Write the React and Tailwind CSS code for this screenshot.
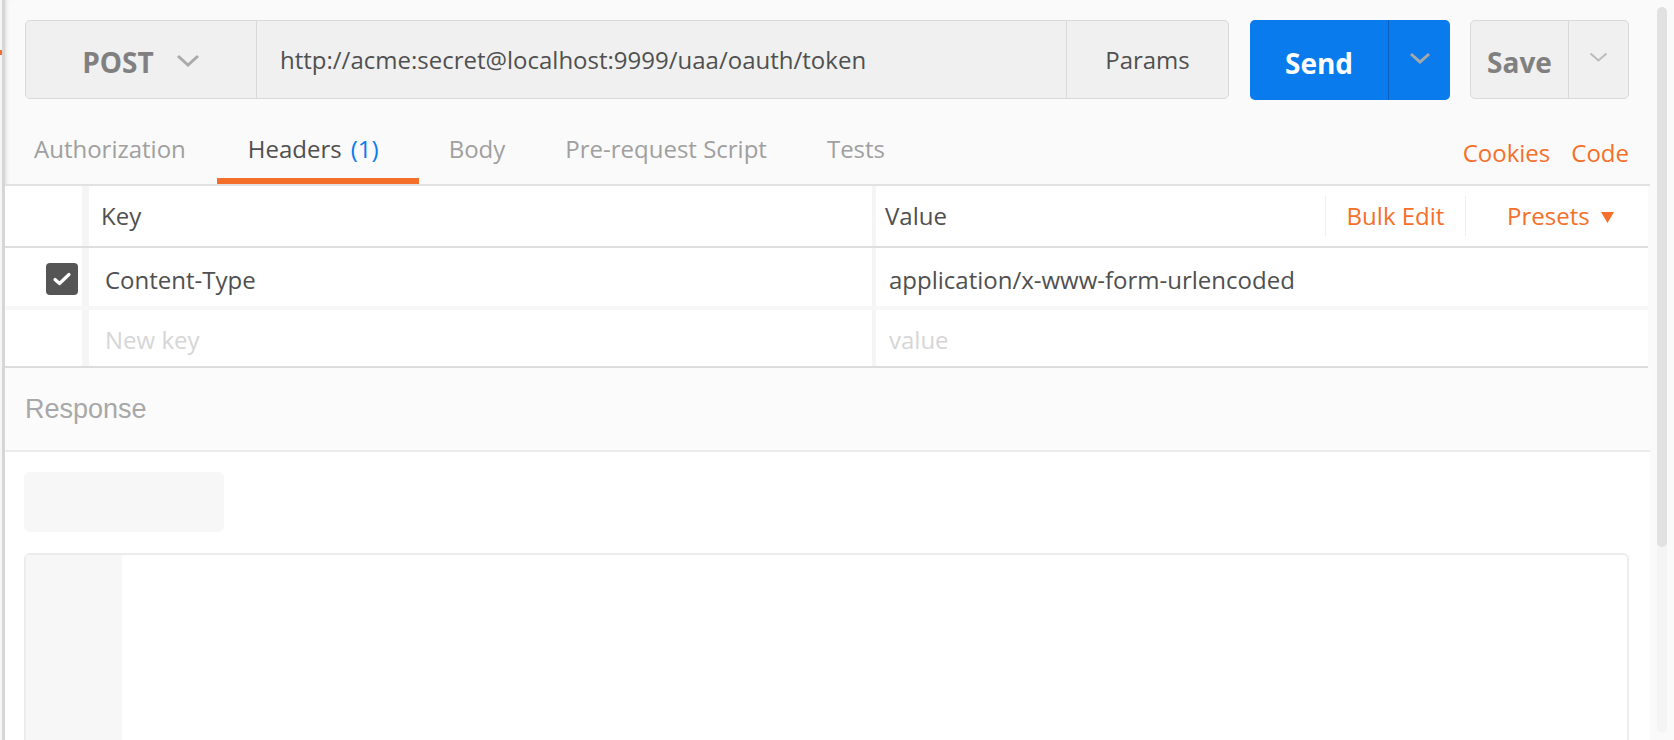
import React from "react";

function Chevron({ className, color = "#aaaaaa", w = 24, h = 13, sw = 3 }) {
  return (
    <svg width={w} height={h} viewBox={`0 0 ${w} ${h}`} className={className}>
      <path d={`M${sw / 2 + 0.5} ${sw / 2 + 0.5} L${w / 2} ${h - sw / 2 - 0.5} L${w - sw / 2 - 0.5} ${sw / 2 + 0.5}`} fill="none" stroke={color} strokeWidth={sw} strokeLinecap="butt" strokeLinejoin="miter" />
    </svg>
  );
}

function Checkbox() {
  return (
    <div className="w-[32px] h-[32px] rounded-[4px] bg-[#555555] flex items-center justify-center">
      <svg width="20" height="16" viewBox="0 0 20 16">
        <path d="M3 8.5 L7.5 12.5 L17 3.5" fill="none" stroke="#ffffff" strokeWidth="3.2" strokeLinecap="round" strokeLinejoin="round" />
      </svg>
    </div>
  );
}

export default function App() {
  return (
    <div className="flex h-[740px] w-[1674px] overflow-hidden bg-[#fafafa] font-['Open_Sans',sans-serif] text-[24px] text-[#505050]">
      {/* far-left strip */}
      <div className="w-[2px] shrink-0 bg-[#f6f6f6]">
        <div className="mt-[50px] h-[5px] bg-[#f4702a]" />
      </div>

      {/* main */}
      <div className="flex flex-1 border-l-[3px] border-[#d6d6d6] shadow-[inset_4px_0_4px_-3px_rgba(0,0,0,0.12)]">
        <div className="flex w-[1645px] shrink-0 flex-col overflow-hidden">
          {/* request bar */}
          <div className="flex shrink-0 items-start pl-[20px] pr-[21px] pt-[20px]">
            <div className="flex h-[79px] w-[1204px] rounded-[5px] border border-[#d9d9d9] bg-[#f0f0f0]">
              <div className="flex w-[231px] items-center justify-center gap-[22px] border-r border-[#d9d9d9] pt-[5px]">
                <span className="text-[28px] font-bold text-[#808080] leading-none">POST</span>
                <Chevron className="mb-[4px]" />
              </div>
              <div className="flex flex-1 items-center border-r border-[#d9d9d9] pl-[23px]">
                http://acme:secret@localhost:9999/uaa/oauth/token
              </div>
              <div className="flex w-[161px] items-center justify-center">Params</div>
            </div>
            <div className="ml-[21px] flex h-[80px] w-[200px] rounded-[5px] bg-[#097bed]">
              <div className="flex w-[139px] items-center justify-center border-r border-[#0a5fb8] pt-[5px] text-[28px] font-bold leading-none text-white">
                Send
              </div>
              <div className="flex flex-1 items-center justify-center pb-[4px] pl-[1px]">
                <Chevron w={22} h={12} sw={3} color="#a8a8a8" />
              </div>
            </div>
            <div className="ml-[20px] flex h-[79px] w-[159px] rounded-[5px] border border-[#d9d9d9] bg-[#f0f0f0]">
              <div className="flex w-[98px] items-center justify-center border-r border-[#d9d9d9] pt-[5px] text-[28px] font-bold leading-none text-[#808080]">
                Save
              </div>
              <div className="flex flex-1 items-center justify-center pb-[6px]">
                <Chevron w={19} h={10} sw={2} color="#bbbbbb" />
              </div>
            </div>
          </div>

          {/* tabs */}
          <div className="flex h-[86px] shrink-0 items-stretch border-b-2 border-[#e2e2e2]">
            <div className="flex h-[84px] items-start pl-[29px] pr-[31px] pt-[32px] leading-[34px] text-[#a0a0a0]">Authorization</div>
            <div className="flex h-[84px] items-start border-b-[6px] border-[#f4702a] pl-[31px] pr-[40px] pt-[32px] leading-[34px] text-[#4f4f4f]">
              Headers <span className="ml-[9px] text-[#097bed]">(1)</span>
            </div>
            <div className="flex h-[84px] items-start px-[30px] pt-[32px] leading-[34px] text-[#a0a0a0]">Body</div>
            <div className="flex h-[84px] items-start px-[30px] pt-[32px] leading-[34px] text-[#a0a0a0]">Pre-request Script</div>
            <div className="flex h-[84px] items-start px-[30px] pt-[32px] leading-[34px] text-[#a0a0a0]">Tests</div>
            <div className="ml-auto flex h-[84px] items-start gap-[21px] pr-[21px] pt-[36px] leading-[34px] text-[#f4702a]">
              <span>Cookies</span>
              <span>Code</span>
            </div>
          </div>

          {/* header table */}
          <div className="flex shrink-0 flex-col pr-[2px]">
            <div className="flex h-[62px] shrink-0 border-b-2 border-[#dedede] bg-[#f5f5f5]">
              <div className="w-[77px] bg-white" />
              <div className="ml-[7px] flex w-[783px] items-center bg-white pl-[12px]">Key</div>
              <div className="ml-[4px] flex w-[772px] items-center bg-white">
                <span className="pl-[9px]">Value</span>
                <div className="ml-auto flex h-[40px] w-[140px] items-center justify-center border-l border-[#efefef] text-[#f4702a]">Bulk Edit</div>
                <div className="flex h-[40px] w-[183px] items-center border-l border-[#efefef] pl-[41px] text-[#f4702a]">
                  Presets
                  <svg width="13" height="11" viewBox="0 0 13 11" className="ml-[11px] mt-[2px]">
                    <path d="M0 0 L13 0 L6.5 11 Z" fill="#f4702a" />
                  </svg>
                </div>
              </div>
            </div>
            <div className="flex h-[58px] shrink-0 bg-[#f5f5f5]">
              <div className="flex w-[77px] items-center bg-white pl-[41px] pt-[3px]">
                <Checkbox />
              </div>
              <div className="ml-[7px] flex w-[783px] items-center bg-white pl-[16px] pt-[5px]">Content-Type</div>
              <div className="ml-[4px] flex w-[772px] items-center bg-white pl-[13px] pt-[5px]">application/x-www-form-urlencoded</div>
            </div>
            <div className="h-[4px] shrink-0 bg-[#f7f7f7]" />
            <div className="flex h-[58px] shrink-0 border-b-2 border-[#dcdcdc] bg-[#f5f5f5]">
              <div className="w-[77px] bg-white" />
              <div className="ml-[7px] flex w-[783px] items-center bg-white pl-[16px] pt-[4px] text-[#d6d6d6]">New key</div>
              <div className="ml-[4px] flex w-[772px] items-center bg-white pl-[13px] pt-[4px] text-[#d6d6d6]">value</div>
            </div>
          </div>

          {/* response header */}
          <div className="flex h-[84px] shrink-0 items-center border-b-2 border-[#ececec] bg-[#fbfbfb] pl-[20px] font-['Liberation_Sans',sans-serif] text-[27px] text-[#a8a8a8]">
            Response
          </div>

          {/* response body */}
          <div className="flex flex-1 flex-col bg-white pl-[19px] pt-[20px]">
            <div className="h-[60px] w-[200px] shrink-0 rounded-[6px] bg-[#f7f7f7]" />
            <div className="mt-[21px] flex h-[300px] w-[1605px] shrink-0 rounded-t-[6px] border-2 border-b-0 border-[#ececec]">
              <div className="w-[96px] bg-[#f7f7f7]" />
            </div>
          </div>
        </div>

        {/* scrollbar */}
        <div className="flex w-[24px] shrink-0 flex-col bg-[#fafafa] pl-[7px] pt-[7px]">
          <div className="flex h-[726px] w-[10px] shrink-0 flex-col rounded-full bg-[#f4f4f4]">
            <div className="h-[540px] w-[10px] shrink-0 rounded-full bg-[#e1e1e1]" />
          </div>
        </div>
      </div>
    </div>
  );
}
